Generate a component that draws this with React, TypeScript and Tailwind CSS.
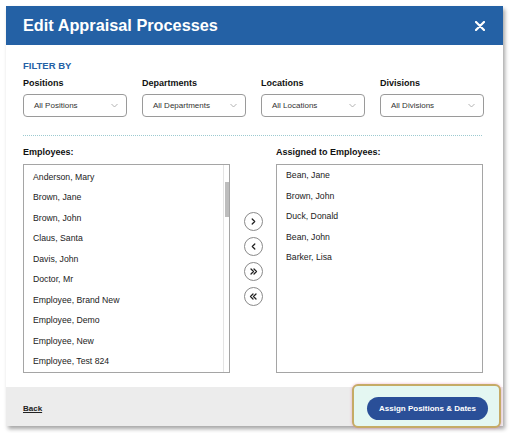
import React from 'react'

const filters = [
  { label: 'Positions', value: 'All Positions' },
  { label: 'Departments', value: 'All Departments' },
  { label: 'Locations', value: 'All Locations' },
  { label: 'Divisions', value: 'All Divisions' },
]

const employees = [
  'Anderson, Mary',
  'Brown, Jane',
  'Brown, John',
  'Claus, Santa',
  'Davis, John',
  'Doctor, Mr',
  'Employee, Brand New',
  'Employee, Demo',
  'Employee, New',
  'Employee, Test 824',
]

const assigned = ['Bean, Jane', 'Brown, John', 'Duck, Donald', 'Bean, John', 'Barker, Lisa']

// single / double chevrons for the transfer buttons
function Chevron({ dir, double }: { dir: 'left' | 'right'; double?: boolean }) {
  const one = dir === 'right' ? 'M4.2 3 L6.7 5.5 L4.2 8' : 'M6.8 3 L4.3 5.5 L6.8 8'
  const two =
    dir === 'right'
      ? 'M3 3 L5.5 5.5 L3 8 M6 3 L8.5 5.5 L6 8'
      : 'M5 3 L2.5 5.5 L5 8 M8 3 L5.5 5.5 L8 8'
  return (
    <svg width="11" height="11" viewBox="0 0 11 11" fill="none">
      <path d={double ? two : one} stroke="#222" strokeWidth="1.3" strokeLinecap="round" strokeLinejoin="round" />
    </svg>
  )
}

function TransferButton({ children }: { children: React.ReactNode }) {
  return (
    <button className="flex h-[19px] w-[19px] items-center justify-center rounded-full border border-[#8a8a8a] bg-white">
      {children}
    </button>
  )
}

export default function App() {
  return (
    <div
      className="min-h-[433px] w-[511px] bg-white pl-[6px] pt-[6px]"
      style={{ fontFamily: '"Liberation Sans", Arial, sans-serif' }}
    >
      <div className="relative w-[497px] bg-white shadow-[2px_3px_4px_rgba(0,0,0,0.35)]">
        {/* header */}
        <div className="flex h-[39px] items-center justify-between bg-[#2461a5] pl-[17px] pr-[18px]">
          <h1 className="text-[16.3px] font-bold leading-none text-white">Edit Appraisal Processes</h1>
          <svg width="10" height="10" viewBox="0 0 10 10">
            <path d="M1 1 L9 9 M9 1 L1 9" stroke="white" strokeWidth="2.2" strokeLinecap="round" />
          </svg>
        </div>

        {/* body */}
        <div className="px-[17px] pb-[14px] pt-[15px]">
          <div className="text-[9.5px] font-bold leading-[11px] text-[#2461a5]">FILTER BY</div>

          <div className="mt-[7px] flex gap-[15px]">
            {filters.map((f) => (
              <div key={f.label} className="w-[104px]">
                <div className="text-[9px] font-bold leading-[11px] text-[#111]">{f.label}</div>
                <div className="mt-[5px] flex h-[23px] items-center justify-between rounded-[4px] border border-[#9a9a9a] pl-[10px] pr-[8px]">
                  <span className="text-[8px] text-[#333]">{f.value}</span>
                  <svg width="7" height="5" viewBox="0 0 7 5" fill="none">
                    <path d="M0.5 1 L3.5 4 L6.5 1" stroke="#aaa" strokeWidth="0.9" />
                  </svg>
                </div>
              </div>
            ))}
          </div>

          <div className="mt-[18px] w-[459px] border-t border-dotted border-[#9ccad0]" />

          <div className="mt-[11px] flex">
            {/* available employees */}
            <div className="w-[207px]">
              <div className="text-[9px] font-bold leading-[11px] text-[#111]">Employees:</div>
              <div className="relative mt-[6px] h-[209px] border border-[#a5a5a5] pt-[2px]">
                {employees.map((name) => (
                  <div key={name} className="h-[20.45px] pl-[9px] text-[8.7px] leading-[20.45px] text-[#222]">
                    {name}
                  </div>
                ))}
                {/* scrollbar */}
                <div className="absolute bottom-0 right-0 top-0 w-[6px] border-l border-[#e4e4e4] bg-white">
                  <div className="ml-[1px] mt-[17px] h-[35px] w-[4px] bg-[#bdbdbd]" />
                </div>
              </div>
            </div>

            {/* transfer controls */}
            <div className="flex w-[46px] flex-col items-center gap-[6px] pt-[65px]">
              <TransferButton>
                <Chevron dir="right" />
              </TransferButton>
              <TransferButton>
                <Chevron dir="left" />
              </TransferButton>
              <TransferButton>
                <Chevron dir="right" double />
              </TransferButton>
              <TransferButton>
                <Chevron dir="left" double />
              </TransferButton>
            </div>

            {/* assigned employees */}
            <div className="w-[207px]">
              <div className="text-[9px] font-bold leading-[11px] text-[#111]">Assigned to Employees:</div>
              <div className="mt-[6px] h-[209px] border border-[#a5a5a5]">
                {assigned.map((name, i) => (
                  <div key={i} className="h-[20.5px] pl-[9px] text-[8.7px] leading-[20.5px] text-[#222]">
                    {name}
                  </div>
                ))}
              </div>
            </div>
          </div>
        </div>

        {/* footer */}
        <div className="relative flex h-[39px] items-center justify-between bg-[#ececec] pb-[2px] pl-[17px] pr-[15px] pt-[6px]">
          <a className="text-[8px] font-bold text-[#222] underline">Back</a>
          <div className="absolute left-[346px] top-[-3px] h-[44px] w-[149px] rounded-[6px] border-2 border-[#c5ab66] bg-[#e4f7f2] shadow-[0_0_3px_rgba(230,120,160,0.6)]" />
          <button className="relative h-[23px] w-[121px] rounded-full bg-[#2a4f98] text-[8px] font-bold text-white">
            Assign Positions &amp; Dates
          </button>
        </div>
      </div>
    </div>
  )
}
